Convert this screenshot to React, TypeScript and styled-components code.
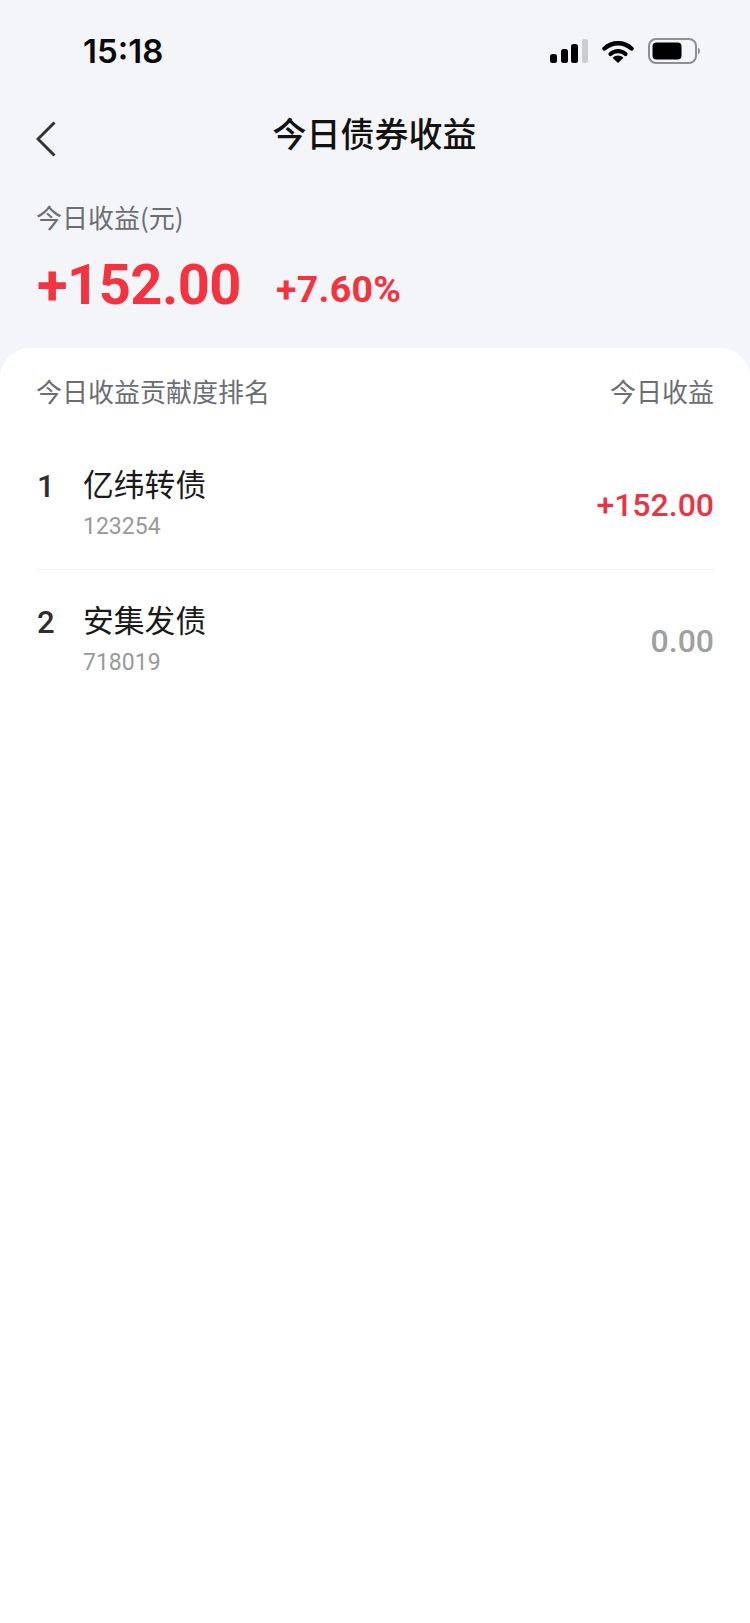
import React from "react";
import styled, { createGlobalStyle } from "styled-components";

const CJK = `"Noto Sans CJK SC", "Noto Sans", sans-serif`;
const NUM = `Roboto, "Noto Sans CJK SC", sans-serif`;

const Global = createGlobalStyle`
  html, body { margin: 0; padding: 0; background: #f4f5f9; }
  * { box-sizing: border-box; }
`;

const Page = styled.div`
  width: 750px;
  height: 1623px;
  display: flex;
  flex-direction: column;
  background: #f4f5f9;
  overflow: hidden;
`;

const StatusBar = styled.div`
  height: 100px;
  padding: 2px 49px 0 83px;
  display: flex;
  align-items: center;
  justify-content: space-between;
`;

const Time = styled.span`
  font: 600 33px/40px Inter, sans-serif;
  letter-spacing: 0;
  color: #0a0a0a;
`;

const StatusIcons = styled.div`
  display: flex;
  align-items: center;
  gap: 14px;
`;

const Nav = styled.div`
  height: 68px;
  padding: 0 36px;
  display: flex;
  align-items: center;
`;

const BackWrap = styled.div`
  display: flex;
  margin-top: 10px;
`;

const NavTitle = styled.h1`
  flex: 1;
  margin: -2px 0 0 -1px;
  padding-right: 20px;
  text-align: center;
  font: 500 34px/48px ${CJK};
  color: #111;
`;

const Summary = styled.div`
  height: 180px;
  padding: 28px 36px 0 36px;
  display: flex;
  flex-direction: column;
`;

const Label = styled.div`
  font: 400 26px/42px ${CJK};
  color: #6b6e73;
`;

const Figures = styled.div`
  margin-top: 14px;
  padding-left: 1px;
  display: flex;
  align-items: flex-end;
  gap: 35px;
`;

const Hero = styled.span`
  font: 700 56px/66px ${NUM};
  letter-spacing: -0.5px;
  color: #f5333f;
`;

const HeroPercent = styled.span`
  font: 700 37.5px/44px ${NUM};
  letter-spacing: 0.3px;
  margin-bottom: 7px;
  color: #f5333f;
`;

const Card = styled.div`
  flex: 1;
  padding: 0 36px;
  background: #fff;
  border-radius: 30px 30px 0 0;
`;

const CardHeader = styled.div`
  height: 86px;
  padding-top: 22px;
  display: flex;
  align-items: flex-start;
  justify-content: space-between;
  font: 400 26px/42px ${CJK};
  color: #6b6e73;
`;

const Row = styled.div<{ $last?: boolean }>`
  height: 136px;
  padding-top: 28px;
  display: flex;
  align-items: flex-start;
  border-bottom: ${(p) => (p.$last ? "none" : "1px solid #f3f3f5")};
`;

const Rank = styled.span`
  width: 47px;
  padding-left: 1px;
  margin-top: 5px;
  font: 500 31px/40px ${NUM};
  color: #2e2e2e;
`;

const Info = styled.div`
  flex: 1;
  display: flex;
  flex-direction: column;
`;

const Name = styled.span`
  font: 400 30.8px/42px ${CJK};
  color: #1a1a1a;
`;

const Code = styled.span`
  margin-top: 4px;
  font: 400 23px/38px ${NUM};
  letter-spacing: 0;
  color: #999;
`;

const Amount = styled.span<{ $up?: boolean }>`
  margin-top: 23px;
  font: 500 32px/40px ${NUM};
  color: ${(p) => (p.$up ? "#ea3445" : "#a0a0a0")};
`;

const rows = [
  { rank: 1, name: "亿纬转债", code: "123254", amount: "+152.00", up: true },
  { rank: 2, name: "安集发债", code: "718019", amount: "0.00", up: false },
];

const Signal = () => (
  <svg width="38" height="24" viewBox="0 0 38 24">
    <rect x="0" y="15" width="7" height="9" rx="2.5" fill="#000" />
    <rect x="11" y="10" width="7" height="14" rx="2.5" fill="#000" />
    <rect x="21" y="5" width="7" height="19" rx="2.5" fill="#000" />
    <rect x="32" y="0" width="6" height="24" rx="2" fill="#ccc" />
  </svg>
);

const Wifi = () => (
  <svg width="32" height="24" viewBox="0 0 32 24">
    <path d="M2.5 9.5A20 20 0 0 1 29.5 9.5" fill="none" stroke="#000" strokeWidth="4.4" strokeLinecap="round" />
    <path d="M8.5 15A11 11 0 0 1 23.5 15" fill="none" stroke="#000" strokeWidth="4.2" strokeLinecap="round" />
    <path d="M16 24L10.5 18.8A8 8 0 0 1 21.5 18.8Z" fill="#000" />
  </svg>
);

const Battery = () => (
  <svg width="53" height="26" viewBox="0 0 53 26">
    <rect x="1" y="1" width="47" height="24" rx="7" fill="none" stroke="#8e8e93" strokeWidth="2" />
    <rect x="4.5" y="4.5" width="29" height="17" rx="4" fill="#000" />
    <path d="M50.5 10Q52.5 13 50.5 16Z" fill="#8e8e93" stroke="#8e8e93" />
  </svg>
);

const BackIcon = () => (
  <svg width="20" height="36" viewBox="0 0 20 36">
    <path d="M18.5 1.5L2 18L18.5 34.5" fill="none" stroke="#333" strokeWidth="3" />
  </svg>
);

export default function App() {
  return (
    <Page>
      <Global />
      <StatusBar>
        <Time>15:18</Time>
        <StatusIcons>
          <Signal />
          <Wifi />
          <Battery />
        </StatusIcons>
      </StatusBar>
      <Nav>
        <BackWrap>
          <BackIcon />
        </BackWrap>
        <NavTitle>今日债券收益</NavTitle>
      </Nav>
      <Summary>
        <Label>今日收益(元)</Label>
        <Figures>
          <Hero>+152.00</Hero>
          <HeroPercent>+7.60%</HeroPercent>
        </Figures>
      </Summary>
      <Card>
        <CardHeader>
          <span>今日收益贡献度排名</span>
          <span>今日收益</span>
        </CardHeader>
        {rows.map((r, i) => (
          <Row key={r.rank} $last={i === rows.length - 1}>
            <Rank>{r.rank}</Rank>
            <Info>
              <Name>{r.name}</Name>
              <Code>{r.code}</Code>
            </Info>
            <Amount $up={r.up}>{r.amount}</Amount>
          </Row>
        ))}
      </Card>
    </Page>
  );
}
